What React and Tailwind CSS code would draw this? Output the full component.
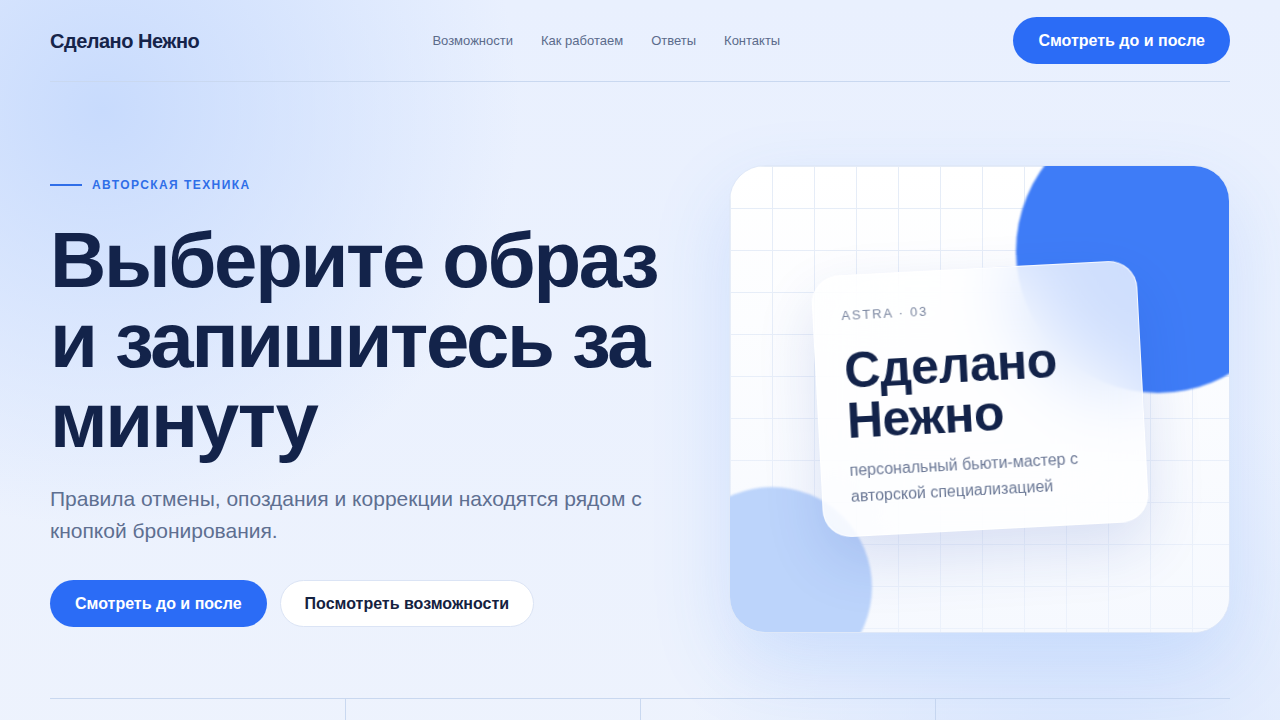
const navLinks = ['Возможности', 'Как работаем', 'Ответы', 'Контакты'];

const stats = [
  { value: '15 мин', label: 'на запись' },
  { value: '4.9', label: 'средняя оценка' },
  { value: '1200+', label: 'довольных клиентов' },
  { value: '24/7', label: 'онлайн-бронирование' },
];

const App = () => {
  return (
    <div className="min-h-screen font-['Liberation_Sans',Arial,sans-serif] text-[#14244a] bg-[radial-gradient(circle_at_8%_13%,#c8dbfd_0%,rgba(200,219,253,0)_30%),radial-gradient(circle_at_85%_92%,#d9e6fd_0%,rgba(217,230,253,0)_30%),linear-gradient(180deg,#e9f0fe_0%,#eef3fd_100%)]">
      <div className="max-w-[1280px] mx-auto px-[50px]">
        {/* Header */}
        <header className="h-[82px] flex items-center justify-between border-b border-[#c9d8f0]">
          <div className="text-[20px] font-bold tracking-tight text-[#16244a]">Сделано Нежно</div>
          <nav className="flex items-center gap-7 text-[13px] text-[#5b6b8b]">
            {navLinks.map((link) => (
              <a key={link} href="#" className="hover:text-[#2b6cf6]">
                {link}
              </a>
            ))}
          </nav>
          <button className="h-[47px] px-[25px] rounded-full bg-[#2b6cf6] text-white text-[16px] font-bold">
            Смотреть до и после
          </button>
        </header>

        {/* Hero */}
        <section className="grid grid-cols-[1fr_501px] gap-12 items-start pt-[83px] pb-[65px]">
          <div className="pt-[13px]">
            <div className="flex items-center gap-[10px]">
              <span className="w-8 h-[2px] bg-[#2f6ee8]" />
              <span className="text-[12px] leading-[14px] font-bold tracking-[0.12em] text-[#2f6ee8]">АВТОРСКАЯ ТЕХНИКА</span>
            </div>
            <h1 className="mt-[28px] text-[78px] leading-[80px] font-bold tracking-[-0.03em] text-[#13234a]">
              Выберите образ
              <br />
              и запишитесь за
              <br />
              минуту
            </h1>
            <p className="mt-[23px] max-w-[620px] text-[21px] leading-[32px] text-[#5e6f91]">
              Правила отмены, опоздания и коррекции находятся рядом с кнопкой бронирования.
            </p>
            <div className="mt-[33px] flex items-center gap-[13px]">
              <button className="h-[47px] px-[25px] rounded-full bg-[#2b6cf6] text-white text-[16px] font-bold">
                Смотреть до и после
              </button>
              <button className="h-[47px] px-6 rounded-full bg-white border border-[#dbe4f5] text-[#14213f] text-[16px] font-bold">
                Посмотреть возможности
              </button>
            </div>
          </div>

          {/* Visual */}
          <div className="relative h-[468px] rounded-[36px] overflow-hidden border border-[#dfe8f8] bg-white shadow-[0_30px_80px_rgba(59,130,246,0.16)] flex items-center justify-center">
            <div className="absolute inset-0 bg-[linear-gradient(to_right,#e5ecf7_1px,transparent_1px),linear-gradient(to_bottom,#e5ecf7_1px,transparent_1px)] bg-[size:42px_42px]" />
            <div className="absolute inset-0 bg-[linear-gradient(180deg,rgba(255,255,255,0)_0%,rgba(240,245,254,0.6)_100%)]" />
            <div className="absolute left-[286px] top-[-57px] w-[284px] h-[284px] rounded-full bg-[#3e7cf7] blur-[1px]" />
            <div className="absolute left-[-58px] top-[321px] w-[200px] h-[200px] rounded-full bg-[#bcd4fb] blur-[1px]" />

            <div className="relative w-[326px] rotate-[-3deg] rounded-[28px] bg-white/75 backdrop-blur-2xl border border-white/80 shadow-[0_24px_60px_rgba(30,64,175,0.14)] px-7 pt-[30px] pb-[26px]">
              <div className="text-[13px] leading-[20px] tracking-[0.14em] text-[#7a86a0]">ASTRA · 03</div>
              <div className="mt-[20px] text-[50px] leading-[50px] font-bold tracking-[-0.01em] text-[#13234a]">
                Сделано
                <br />
                Нежно
              </div>
              <p className="mt-[12px] text-[16px] leading-[26px] text-[#6b7896]">
                персональный бьюти-мастер с авторской специализацией
              </p>
            </div>
          </div>
        </section>

        {/* Stats */}
        <section className="grid grid-cols-4 border-t border-[#c9d8f0]">
          {stats.map((s, idx) => (
            <div key={s.label} className={idx > 0 ? 'border-l border-[#c9d8f0] px-6 pt-10 pb-10' : 'px-6 pt-10 pb-10'}>
              <div className="text-[32px] font-bold text-[#13234a]">{s.value}</div>
              <div className="mt-1 text-[14px] text-[#5e6f91]">{s.label}</div>
            </div>
          ))}
        </section>
      </div>
    </div>
  );
};

export default App;
